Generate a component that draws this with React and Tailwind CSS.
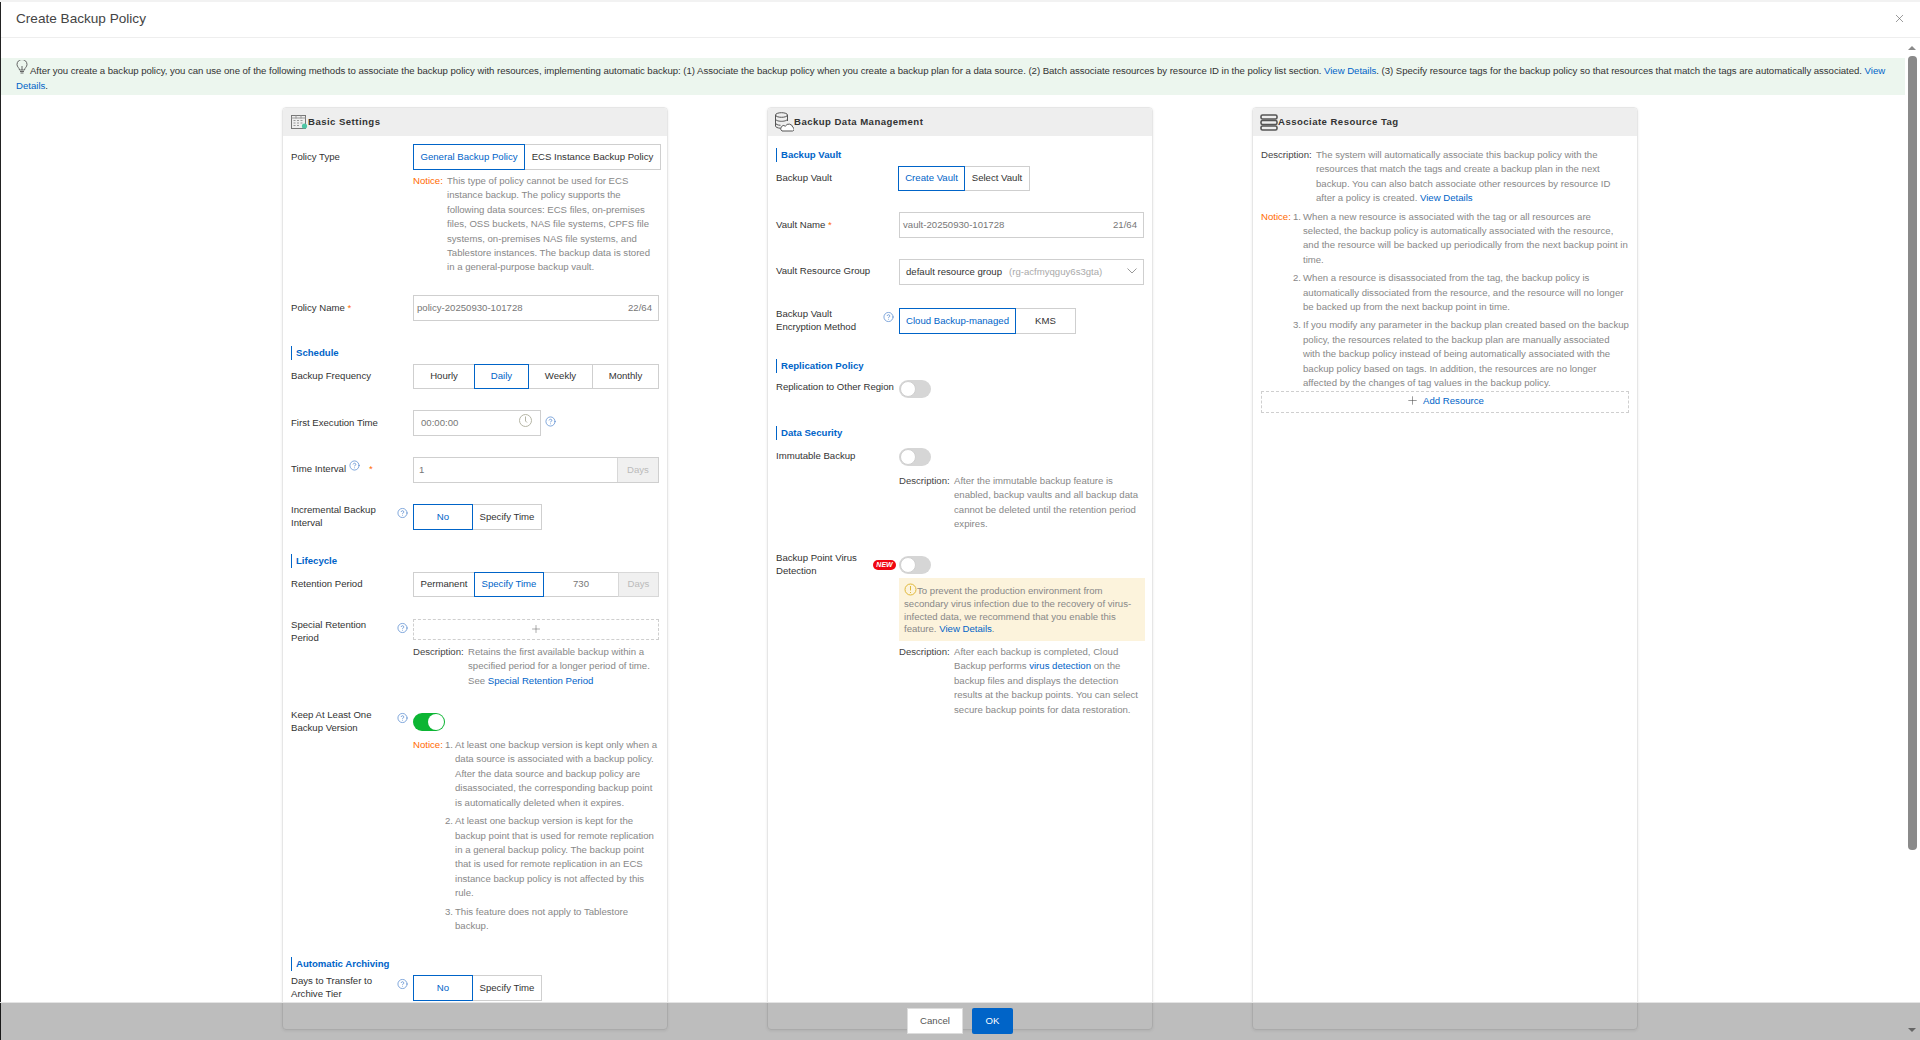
import React from "react";
import { CircleHelp, X, Plus } from "lucide-react";

const Help = ({ className = "" }) => (
  <CircleHelp size={11} strokeWidth={1.5} className={`shrink-0 text-[#4a82cc] ${className}`} />
);

const A = ({ children }) => <span className="text-[#0064c8]">{children}</span>;

const Section = ({ className, children }) => (
  <div className={`h-[14px] border-l border-[#0064c8] pl-[4px] text-[9.6px] font-bold leading-[14px] text-[#0064c8] ${className}`}>
    {children}
  </div>
);

const Row = ({ className = "", labelClass = "", label, help, width = "w-[122px]", children }) => (
  <div className={`flex items-start ${className}`}>
    <div className={`flex shrink-0 justify-between pr-[5px] ${width} ${labelClass}`}>
      <div className={`leading-[13px] text-[#333] ${help ? "mt-[-1px]" : ""}`}>{label}</div>
      {help && <Help className="mt-[-1px] translate-y-[4.5px]" />}
    </div>
    {children}
  </div>
);

const Seg = ({ items }) => (
  <div className="flex h-full">
    {items.map(([t, w, on]) => (
      <div
        key={t}
        className={`-ml-px flex h-full items-center justify-center border first:ml-0 ${w} ${
          on ? "relative z-10 border-[#0064c8] text-[#0064c8]" : "border-[#cfcfcf] text-[#333]"
        }`}
      >
        {t}
      </div>
    ))}
  </div>
);

const Lines = ({ lines, className = "" }) => (
  <div className={`whitespace-nowrap leading-[14.4px] text-[#888] ${className}`}>
    {lines.map((l, i) => (
      <div key={i}>{l}</div>
    ))}
  </div>
);

const Toggle = ({ on }) => (
  <div
    className={`flex h-[18px] w-[32px] shrink-0 items-center rounded-full p-[1px] ${
      on ? "justify-end bg-[#0cb533]" : "justify-start bg-[#d6d6d6]"
    }`}
  >
    <div className={`h-[16px] w-[16px] rounded-full bg-white ${on ? "" : "border border-[#d0d0d0]"}`} />
  </div>
);

const GridIcon = () => (
  <svg width="17" height="15" viewBox="0 0 17 15" fill="none" className="shrink-0">
    <rect x="0.5" y="0.5" width="14" height="13" stroke="#777" />
    <path d="M0.5 3h14M2.5 5.5h2M6 5.5h2M9.5 5.5h2M2.5 8h2M6 8h2M9.5 8h2M2.5 10.5h2M6 10.5h2M5 0.5v3M10 0.5v3" stroke="#999" />
    <circle cx="13.5" cy="11" r="2.6" fill="#4fc6a5" />
  </svg>
);

const DbIcon = () => (
  <svg width="20" height="20" viewBox="0 0 20 20" fill="none" className="shrink-0" stroke="#555" strokeWidth="1">
    <ellipse cx="7.5" cy="3" rx="6" ry="2.3" />
    <path d="M1.5 3v11c0 1.2 2 2 5 2.3M13.5 3v6M1.5 7c0 1.3 2.7 2.3 6 2.3s6-1 6-2.3M1.5 11c0 1.2 2.2 2.2 5 2.3" />
    <path d="M8 19h10.5a1.9 1.9 0 0 0 .3-3.7 4 4 0 0 0-7.4-1.2A2.6 2.6 0 0 0 8 19z" fill="#fff" />
  </svg>
);

const ServerIcon = () => (
  <svg width="18" height="17" viewBox="0 0 18 17" fill="none" className="shrink-0" stroke="#555" strokeWidth="1.6">
    <rect x="1" y="1" width="16" height="4" rx="1.5" />
    <rect x="1" y="6.5" width="16" height="4" rx="1.5" />
    <rect x="1" y="12" width="16" height="4" rx="1.5" />
  </svg>
);

const Card = ({ icon, title, gapClass, children }) => (
  <div className="h-[923px] w-[386px] shrink-0 overflow-hidden rounded-[4px] border border-[#e6e6e6] shadow-[0_1px_3px_rgba(0,0,0,0.08)]">
    <div className={`flex h-[28px] items-center bg-[#eeeeee] ${gapClass}`}>
      {icon}
      <span className="text-[9.6px] font-bold tracking-[0.45px] text-[#333]">{title}</span>
    </div>
    {children}
  </div>
);

export default function App() {
  return (
    <div className="relative flex h-[1040px] w-[1920px] flex-col overflow-hidden bg-white text-[9.6px] [font-family:'Liberation_Sans',sans-serif]">
      <div className="h-[2px] shrink-0 bg-[#f2f2f2]" />
      <div className="flex min-h-0 flex-1 border-l border-[#222]">
        <div className="flex min-w-0 flex-1 flex-col">
          <div className="flex h-[36px] shrink-0 items-center justify-between border-b border-[#eeeeee] px-[15px] pb-[1px]">
            <span className="text-[13.6px] text-[#444]">Create Backup Policy</span>
          </div>
          <div className="flex min-h-0 flex-1">
            <div className="min-w-0 flex-1">
              <div className="mt-[20px] h-[37px] bg-[#ecf6ee] pt-[5px] pl-[15px] text-[#333]">
                <div className="flex items-start whitespace-nowrap leading-[15px] tracking-[-0.033px]">
                  <svg width="12" height="15" viewBox="0 0 12 15" fill="none" stroke="#555" strokeWidth="0.9" className="mt-[-3px] mr-[2px] shrink-0">
                    <path d="M3.5 10c0-2-2.5-3-2.5-5.5a5 5 0 0 1 10 0C11 7 8.5 8 8.5 10zM4 11.5h4M4.5 13h3M6 10V6" />
                  </svg>
                  <span>
                    After you create a backup policy, you can use one of the following methods to associate the backup policy with resources, implementing automatic backup: (1) Associate the backup policy when you create a backup plan for a data source. (2) Batch associate resources by resource ID in the policy list section. <A>View Details</A>. (3) Specify resource tags for the backup policy so that resources that match the tags are automatically associated. <A>View</A>
                  </span>
                </div>
                <div className="leading-[15px]"><A>Details</A>.</div>
              </div>

              <div className="mt-[12px] ml-[281px] flex gap-[99px]">
                {/* Basic Settings */}
                <Card icon={<GridIcon />} title="Basic Settings" gapClass="pl-[8px]">
                  <div className="px-[8px]">
                    <Row className="mt-[8px] h-[26px]" labelClass="pt-[6px]" label="Policy Type">
                      <Seg items={[["General Backup Policy", "w-[112px]", true], ["ECS Instance Backup Policy", "w-[137px]", false]]} />
                    </Row>
                    <div className="mt-[4px] ml-[122px] flex">
                      <span className="w-[34px] shrink-0 leading-[14.4px] text-[#ff6a00]">Notice:</span>
                      <Lines lines={["This type of policy cannot be used for ECS", "instance backup. The policy supports the", "following data sources: ECS files, on-premises", "files, OSS buckets, NAS file systems, CPFS file", "systems, on-premises NAS file systems, and", "Tablestore instances. The backup data is stored", "in a general-purpose backup vault."]} />
                    </div>
                    <Row className="mt-[20px] h-[26px]" labelClass="pt-[6.5px]" label={<>Policy Name <span className="text-[#ff6a00]">*</span></>}>
                      <div className="flex h-full w-[247px] items-center justify-between border border-[#cfcfcf] pr-[6px] pl-[3px] text-[#777]">
                        <span>policy-20250930-101728</span><span>22/64</span>
                      </div>
                    </Row>

                    <Section className="mt-[25px]">Schedule</Section>
                    <Row className="mt-[4px] h-[25px]" labelClass="pt-[5px]" label="Backup Frequency">
                      <Seg items={[["Hourly", "w-[62px]", false], ["Daily", "w-[55px]", true], ["Weekly", "w-[65px]", false], ["Monthly", "w-[67px]", false]]} />
                    </Row>
                    <Row className="mt-[21px] h-[26px]" labelClass="pt-[6px]" label="First Execution Time">
                      <div className="flex h-full w-[128px] items-center justify-between border border-[#cfcfcf] pr-[8px] pl-[7px] text-[#777]">
                        <span>00:00:00</span>
                        <svg width="13" height="13" viewBox="0 0 13 13" fill="none" stroke="#b5b5a5" className="mt-[-4px]"><circle cx="6.5" cy="6.5" r="6" /><path d="M6.5 2.5v4.5l1.5 1.5" /></svg>
                      </div>
                      <Help className="mt-[6px] ml-[3.5px]" />
                    </Row>
                    <Row className="mt-[21px] h-[26px]" labelClass="pt-[5px]" label={
                      <span className="flex items-start">Time Interval<Help className="ml-[3px] mt-[-2px]" /><span className="ml-[9px] text-[#ff6a00]">*</span></span>
                    }>
                      <div className="flex h-full w-[247px] items-center border border-[#cfcfcf] text-[#777]">
                        <span className="flex-1 pl-[5px]">1</span>
                        <span className="flex h-full w-[41px] items-center justify-center border-l border-[#d8d8d8] bg-[#f0f0f0] text-[#bbb]">Days</span>
                      </div>
                    </Row>
                    <Row className="mt-[21px] h-[26px]" help label={<>Incremental Backup<br />Interval</>}>
                      <Seg items={[["No", "w-[60px]", true], ["Specify Time", "w-[70px]", false]]} />
                    </Row>

                    <Section className="mt-[24px]">Lifecycle</Section>
                    <Row className="mt-[4px] h-[25px]" labelClass="pt-[5px]" label="Retention Period">
                      <div className="flex h-full">
                        <Seg items={[["Permanent", "w-[62px]", false], ["Specify Time", "w-[70px]", true]]} />
                        <div className="flex h-full w-[74px] items-center justify-center border-y border-[#cfcfcf] text-[#777]">730</div>
                        <div className="flex h-full w-[41px] items-center justify-center border border-[#d8d8d8] bg-[#f0f0f0] text-[#bbb]">Days</div>
                      </div>
                    </Row>
                    <Row className="mt-[22px] h-[21px]" help label={<>Special Retention<br />Period</>}>
                      <div className="flex h-full w-[247px] items-center justify-center border border-dashed border-[#cfcfcf] text-[#555]">
                        <Plus size={12} strokeWidth={1} />
                      </div>
                    </Row>
                    <div className="mt-[5px] ml-[122px] flex">
                      <span className="w-[55px] shrink-0 leading-[14.4px] text-[#444]">Description:</span>
                      <Lines lines={["Retains the first available backup within a", "specified period for a longer period of time.", <>See <A>Special Retention Period</A></>]} />
                    </div>
                    <Row className="mt-[25px] h-[17px]" labelClass="mt-[-4.5px]" help label={<>Keep At Least One<br />Backup Version</>}>
                      <Toggle on />
                    </Row>
                    <div className="mt-[8px] ml-[122px] flex">
                      <span className="w-[32px] shrink-0 leading-[14.4px] text-[#ff6a00]">Notice:</span>
                      <div className="flex flex-col gap-[4px]">
                        {[["1.", ["At least one backup version is kept only when a", "data source is associated with a backup policy.", "After the data source and backup policy are", "disassociated, the corresponding backup point", "is automatically deleted when it expires."]],
                          ["2.", ["At least one backup version is kept for the", "backup point that is used for remote replication", "in a general backup policy. The backup point", "that is used for remote replication in an ECS", "instance backup policy is not affected by this", "rule."]],
                          ["3.", ["This feature does not apply to Tablestore", "backup."]]].map(([n, l]) => (
                          <div key={n} className="flex"><span className="w-[10px] shrink-0 leading-[14.4px] text-[#888]">{n}</span><Lines lines={l} /></div>
                        ))}
                      </div>
                    </div>

                    <Section className="mt-[24px]">Automatic Archiving</Section>
                    <Row className="mt-[4px] h-[26px]" help label={<>Days to Transfer to<br />Archive Tier</>}>
                      <Seg items={[["No", "w-[60px]", true], ["Specify Time", "w-[70px]", false]]} />
                    </Row>
                  </div>
                </Card>

                {/* Backup Data Management */}
                <Card icon={<DbIcon />} title="Backup Data Management" gapClass="pl-[6px]">
                  <div className="px-[8px]">
                    <Section className="mt-[12px]">Backup Vault</Section>
                    <Row className="mt-[4px] h-[25px]" width="w-[122px]" labelClass="pt-[5px]" label="Backup Vault">
                      <Seg items={[["Create Vault", "w-[67px]", true], ["Select Vault", "w-[66px]", false]]} />
                    </Row>
                    <Row className="mt-[21px] h-[26px]" width="w-[123px]" labelClass="pt-[6px]" label={<>Vault Name <span className="text-[#ff6a00]">*</span></>}>
                      <div className="flex h-full w-[246px] items-center justify-between border border-[#cfcfcf] pr-[6px] pl-[3px] text-[#777]">
                        <span>vault-20250930-101728</span><span>21/64</span>
                      </div>
                    </Row>
                    <Row className="mt-[21px] h-[26px]" width="w-[123px]" labelClass="pt-[5px]" label="Vault Resource Group">
                      <div className="flex h-full w-[246px] items-center border border-[#cfcfcf] pr-[6px] pl-[6px] text-[#333]">
                        <span>default resource group</span>
                        <span className="ml-[7px] flex-1 text-[#aaa]">(rg-acfmyqguy6s3gta)</span>
                        <svg width="10" height="6" viewBox="0 0 10 6" fill="none" stroke="#999" className="mt-[-3px]"><path d="M0.5 0.5L5 5l4.5-4.5" /></svg>
                      </div>
                    </Row>
                    <Row className="mt-[23px] h-[26px]" width="w-[123px]" help label={<>Backup Vault<br />Encryption Method</>}>
                      <Seg items={[["Cloud Backup-managed", "w-[117px]", true], ["KMS", "w-[61px]", false]]} />
                    </Row>

                    <Section className="mt-[25px]">Replication Policy</Section>
                    <Row className="mt-[7px] h-[18px]" width="w-[123px]" labelClass="whitespace-nowrap" label="Replication to Other Region">
                      <Toggle />
                    </Row>

                    <Section className="mt-[28px]">Data Security</Section>
                    <Row className="mt-[8px] h-[18px]" width="w-[123px]" labelClass="pt-[0.5px]" label="Immutable Backup">
                      <Toggle />
                    </Row>
                    <div className="mt-[8px] ml-[123px] flex">
                      <span className="w-[55px] shrink-0 leading-[14.4px] text-[#444]">Description:</span>
                      <Lines lines={["After the immutable backup feature is", "enabled, backup vaults and all backup data", "cannot be deleted until the retention period", "expires."]} />
                    </div>
                    <Row className="mt-[24.4px] h-[18px]" width="w-[123px]" labelClass="mt-[-5.5px]" label={
                      <div className="relative w-[118px]">Backup Point Virus<br />Detection
                        <span className="absolute top-[9px] left-[97px] flex h-[10px] w-[23px] items-center justify-center rounded-full bg-[#f00611] text-[7px] font-bold italic leading-none text-white">NEW</span>
                      </div>
                    }>
                      <Toggle />
                    </Row>
                    <div className="mt-[4px] ml-[123px] h-[63px] w-[246px] bg-[#fcf3dc] px-[5px] pt-[6px] text-[#888]">
                      <div className="flex h-[14px] items-center whitespace-nowrap">
                        <svg width="13" height="13" viewBox="0 0 13 13" fill="none" stroke="#e0b83a" className="mt-[-3px] shrink-0"><circle cx="6.5" cy="6.5" r="5.5" /><path d="M6.5 3v4.5M6.5 9v1" /></svg>
                        <span>To prevent the production environment from</span>
                      </div>
                      <div className="whitespace-nowrap leading-[12.5px]">
                        <div>secondary virus infection due to the recovery of virus-</div>
                        <div>infected data, we recommend that you enable this</div>
                        <div>feature. <A>View Details</A>.</div>
                      </div>
                    </div>
                    <div className="mt-[4px] ml-[123px] flex">
                      <span className="w-[55px] shrink-0 leading-[14.4px] text-[#444]">Description:</span>
                      <Lines lines={["After each backup is completed, Cloud", <>Backup performs <A>virus detection</A> on the</>, "backup files and displays the detection", "results at the backup points. You can select", "secure backup points for data restoration."]} />
                    </div>
                  </div>
                </Card>

                {/* Associate Resource Tag */}
                <Card icon={<ServerIcon />} title="Associate Resource Tag" gapClass="pl-[7px]">
                  <div className="px-[8px]">
                    <div className="mt-[12px] flex">
                      <span className="w-[55px] shrink-0 leading-[14.4px] text-[#444]">Description:</span>
                      <Lines lines={["The system will automatically associate this backup policy with the", "resources that match the tags and create a backup plan in the next", "backup. You can also batch associate other resources by resource ID", <>after a policy is created. <A>View Details</A></>]} />
                    </div>
                    <div className="mt-[4px] flex">
                      <span className="w-[32px] shrink-0 leading-[14.4px] text-[#ff6a00]">Notice:</span>
                      <div className="flex flex-col gap-[4px]">
                        {[["1.", ["When a new resource is associated with the tag or all resources are", "selected, the backup policy is automatically associated with the resource,", "and the resource will be backed up periodically from the next backup point in", "time."]],
                          ["2.", ["When a resource is disassociated from the tag, the backup policy is", "automatically dissociated from the resource, and the resource will no longer", "be backed up from the next backup point in time."]],
                          ["3.", ["If you modify any parameter in the backup plan created based on the backup", "policy, the resources related to the backup plan are manually associated", "with the backup policy instead of being automatically associated with the", "backup policy based on tags. In addition, the resources are no longer", "affected by the changes of tag values in the backup policy."]]].map(([n, l]) => (
                          <div key={n} className="flex"><span className="w-[10px] shrink-0 leading-[14.4px] text-[#888]">{n}</span><Lines lines={l} /></div>
                        ))}
                      </div>
                    </div>
                    <div className="flex h-[22px] w-[368px] items-center justify-center gap-[4px] border border-dashed border-[#cfcfcf]">
                      <Plus size={13} strokeWidth={1} className="mt-[-2px] text-[#444]" />
                      <A>Add Resource</A>
                    </div>
                  </div>
                </Card>
              </div>
            </div>
            {/* scrollbar */}
            <div className="flex w-[15px] shrink-0 flex-col items-start pt-[8px] pl-[3px]">
              <div className="h-0 w-0 border-x-[4.5px] border-b-[4.5px] border-x-transparent border-b-[#8a8a8a]" />
              <div className="mt-[5.5px] h-[794px] w-[9px] rounded-[4px] bg-[#8a8a8a]" />
              <div className="mt-[178px] h-0 w-0 border-x-[4.5px] border-t-[4.5px] border-x-transparent border-t-[#8a8a8a]" />
            </div>
          </div>
        </div>
      </div>
      <X size={13} strokeWidth={1.2} className="absolute top-[11.5px] right-[14.5px] text-[#666]" />
      {/* footer */}
      <div className="absolute inset-x-0 bottom-0 flex h-[38px] justify-center gap-[9px] border-t border-[#e4e4e4] bg-black/[0.26] pt-[5px]">
        <div className="flex h-[26px] w-[56px] items-center justify-center border border-[#ddd] bg-white text-[#555]">Cancel</div>
        <div className="flex h-[26px] w-[41px] items-center justify-center rounded-[2px] bg-[#0064c8] font-medium text-white">OK</div>
      </div>
    </div>
  );
}
